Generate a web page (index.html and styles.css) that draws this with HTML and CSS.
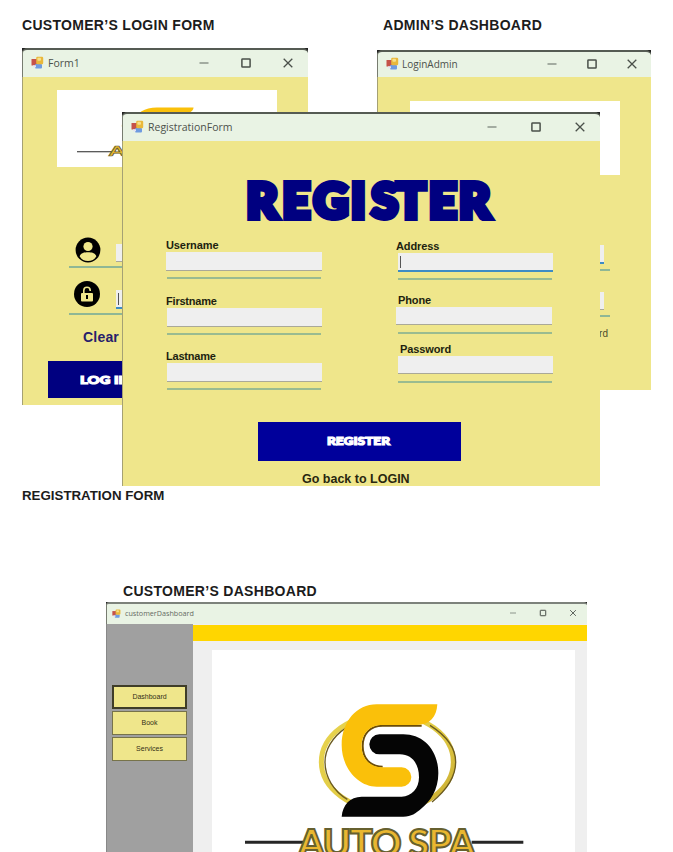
FILE: index.html
```html
<!DOCTYPE html>
<html lang="en">
<head>
<meta charset="utf-8">
<title>Auto Spa forms</title>
<link rel="stylesheet" href="styles.css">
</head>
<body>
<svg class="defs" width="0" height="0" aria-hidden="true">
  <defs>
    <linearGradient id="ring" x1="0" y1="0" x2="1" y2="1">
      <stop offset="0" stop-color="#e8d450"/><stop offset=".5" stop-color="#e2cc45"/><stop offset="1" stop-color="#c9ab30"/>
    </linearGradient>
    <symbol id="app" viewBox="0 0 13 13">
      <rect x=".5" y="3" width="6" height="6.5" fill="#c5524a"/>
      <rect x="4" y="8" width="7" height="4.5" rx="1" fill="#6f9be0"/>
      <rect x="5.2" y=".8" width="7" height="7.4" rx="1.2" fill="#e9b83b"/>
      <rect x="6.4" y="1.8" width="3.6" height="3" rx="1" fill="#f8df8a"/>
      <rect x="2" y="9.3" width="3" height="2" fill="#e6e3f2"/>
    </symbol>
    <symbol id="min" viewBox="0 0 12 12"><path d="M1.5 6h9" stroke="#747c74" stroke-width="1.2"/></symbol>
    <symbol id="max" viewBox="0 0 12 12"><rect x="1.9" y="1.9" width="8.2" height="8.2" rx=".6" fill="none" stroke="#4a504a" stroke-width="1.5"/></symbol>
    <symbol id="close" viewBox="0 0 12 12"><path d="M1.7 1.7l8.6 8.6M10.3 1.7l-8.6 8.6" stroke="#4a504a" stroke-width="1.3"/></symbol>
    <symbol id="logo" viewBox="0 0 363 240" preserveAspectRatio="none">
      <rect width="363" height="240" fill="#fff"/>
      <g transform="translate(18 40) scale(.33333)">
        <ellipse cx="472" cy="216" rx="198" ry="145" fill="none" stroke="url(#ring)" stroke-width="15"/>
        <path d="M350 112C304 142 285 182 285 216C285 260 310 303 352 328" fill="none" stroke="#6a5a20" stroke-width="4"/>
        <path d="M600 106C654 140 677 180 677 216C677 260 650 300 606 336" fill="none" stroke="#6a5a20" stroke-width="4"/>
        <path d="M458 107H575M458 107C420 107 398 132 398 168C398 205 420 230 458 230" fill="none" stroke="#6a4c08" stroke-width="6"/>
        <path d="M622 43H440C380 43 335 95 335 165C335 235 385 290 440 290H515A29 29 0 0 0 515 232H458C420 232 395 205 395 168C395 130 420 105 458 105H560C600 105 620 80 622 43Z" fill="#fac00a"/>
        <path d="M448 133H520C580 133 625 180 625 250C625 300 600 335 575 355C556 371 545 380 520 380H335C338 345 360 320 395 320H515C545 320 567 295 567 262C567 220 545 193 510 193H448A30 30 0 0 1 448 133Z" fill="#050505"/>
        <path d="M45 457H220M725 457H880" stroke="#262626" stroke-width="9"/>
        <text class="logo-text" x="204" y="500" textLength="532">AUTO SPA</text>
      </g>
    </symbol>
  </defs>
</svg>

<main class="board">
  <figure class="fig fig-login">
    <figcaption>CUSTOMER’S LOGIN FORM</figcaption>
    <div class="window">
      <header class="bar">
        <svg class="app"><use href="#app"/></svg><span>Form1</span>
        <nav><svg><use href="#min"/></svg><svg><use href="#max"/></svg><svg><use href="#close"/></svg></nav>
      </header>
      <div class="body">
        <svg class="banner" width="220" height="77"><use href="#logo" width="220" height="77"/></svg>
        <div class="cred">
          <svg class="badge" viewBox="0 0 26 26"><circle cx="13" cy="13" r="12.4"/><circle cx="13" cy="9.5" r="4.6" class="cream"/><path class="cream" d="M4.6 19.2C6 15.8 9 15.2 13 15.2s7 .6 8.4 4C19.500 22.600 16.500 24 13 24s-6.500-1.400-8.400-4.800z"/></svg>
          <i class="input"></i>
        </div>
        <div class="cred second">
          <svg class="badge" viewBox="0 0 26 26"><circle cx="13" cy="13" r="13"/><rect x="7" y="12" width="12" height="8.500" rx="1" class="cream"/><path d="M9.800 12V9.500a3.200 3.200 0 0 1 6.400 0V10" fill="none" stroke="#efe68b" stroke-width="1.600"/><path d="M13 14v4" stroke="#000" stroke-width="2"/></svg>
          <i class="input focus"></i>
        </div>
        <div class="clear">Clear</div>
        <div class="login-btn"><svg width="74" height="14"><text class="display small" x="0" y="11.200" textLength="50" lengthAdjust="spacingAndGlyphs">LOG IN</text></svg></div>
      </div>
    </div>
  </figure>

  <figure class="fig fig-admin">
    <figcaption>ADMIN’S DASHBOARD</figcaption>
    <div class="window">
      <header class="bar">
        <svg class="app"><use href="#app"/></svg><span>LoginAdmin</span>
        <nav><svg><use href="#min"/></svg><svg><use href="#max"/></svg><svg><use href="#close"/></svg></nav>
      </header>
      <div class="body">
        <svg class="banner" width="210" height="74"><use href="#logo" width="210" height="74"/></svg>
        <div class="slot"><i class="input focus"></i></div>
        <div class="slot second"><i class="input"></i></div>
        <div class="show">Show Password</div>
      </div>
    </div>
  </figure>

  <figure class="fig fig-register">
    <div class="window">
      <header class="bar">
        <svg class="app"><use href="#app"/></svg><span>RegistrationForm</span>
        <nav><svg><use href="#min"/></svg><svg><use href="#max"/></svg><svg><use href="#close"/></svg></nav>
      </header>
      <div class="body">
        <svg class="title" width="254" height="48"><text class="display" y="42" x="4.500 40.500 71.500 109 129.500 154.500 187 217">REGISTER</text></svg>
        <div class="columns">
          <div class="col">
            <label class="field"><span>Username</span><i class="input"></i></label>
            <label class="field inset"><span>Firstname</span><i class="input"></i></label>
            <label class="field inset"><span>Lastname</span><i class="input"></i></label>
          </div>
          <div class="col right">
            <label class="field address"><span>Address</span><i class="input focus"></i></label>
            <label class="field phone"><span>Phone</span><i class="input"></i></label>
            <label class="field password"><span>Password</span><i class="input"></i></label>
          </div>
        </div>
        <div class="register-btn"><svg width="68" height="14"><text class="display small" x="2" y="11.300" textLength="63" lengthAdjust="spacingAndGlyphs">REGISTER</text></svg></div>
        <div class="back">Go back to LOGIN</div>
      </div>
    </div>
    <figcaption>REGISTRATION FORM</figcaption>
  </figure>

  <figure class="fig fig-dash">
    <figcaption>CUSTOMER’S DASHBOARD</figcaption>
    <div class="window">
      <header class="bar">
        <svg class="app"><use href="#app"/></svg><span>customerDashboard</span>
        <nav><svg><use href="#min"/></svg><svg><use href="#max"/></svg><svg><use href="#close"/></svg></nav>
      </header>
      <div class="dash">
        <aside><b class="active">Dashboard</b><b>Book</b><b>Services</b></aside>
        <section><div class="gold"></div><svg class="hero" width="363" height="240"><use href="#logo" width="363" height="240"/></svg></section>
      </div>
    </div>
  </figure>
</main>
</body>
</html>
```
FILE: styles.css
```css
* { box-sizing: border-box; }
body { margin: 0; background: #fff; font-family: "Liberation Sans", Arial, sans-serif; }
.defs { display: block; width: 0; height: 0; }
.board { position: relative; width: 673px; height: 852px; overflow: hidden; }
.fig { position: absolute; margin: 0; }
figcaption { font-weight: bold; font-size: 14px; line-height: 16px; letter-spacing: .3px; color: #1c1c1c; white-space: nowrap; }

.fig-login { left: 22px; top: 17px; }
.fig-admin { left: 377px; top: 17px; }
.fig-register { left: 22px; top: 112px; }
.fig-dash { left: 106px; top: 583px; }

.window { background: linear-gradient(#222, #222) top / 100% 8px no-repeat; overflow: hidden; display: flex; flex-direction: column; }
.bar { flex: none; display: flex; align-items: center; background: #e9f3e4; border-top: 2px solid #555b53; border-left: 1px solid #777c70; border-radius: 5px 5px 0 0; font: 10.5px "Open Sans", "Noto Sans", sans-serif; color: #4c514b; padding: 0 0 2px 8px; }
.bar .app { width: 13px; height: 13px; margin-right: 4px; }
.bar nav { margin-left: auto; display: flex; align-items: center; }
.bar nav svg { width: 12px; height: 12px; display: block; }
.body { flex: 1; background: #efe68b; border-left: 1px solid #a5a174; display: flex; flex-direction: column; align-items: flex-start; }
.banner { display: block; flex: none; }
.input { display: block; background: #efefef; border-bottom: 1px solid #aaa998; }
.input.focus { border-bottom: 2px solid #3e8cc4; padding: 3px 0 0 2px; }
.input.focus::before { content: ""; display: block; width: 1px; height: 12px; background: #555; }

.display { font-family: Lato, sans-serif; font-weight: 900; font-size: 48px; fill: #000080; stroke: #000080; stroke-width: 6px; stroke-linejoin: miter; stroke-miterlimit: 3; }
.display.small { font-size: 12px; fill: #fff; stroke: #fff; stroke-width: 1.2px; }
.logo-text { font-family: Lato, sans-serif; font-weight: 900; font-size: 114px; fill: #e9b730; stroke: #66602f; stroke-width: 6px; }

.fig-login .window { width: 286px; height: 357px; margin-top: 15px; }
.fig-login .bar { height: 29px; }
.fig-login nav { gap: 30px; padding-right: 14px; }
.fig-login .banner { margin: 13px 0 0 34px; }
.cred { margin: 70px 0 0 46px; width: 190px; height: 31px; border-bottom: 2px solid #8fb795; display: flex; align-items: flex-start; padding-left: 6px; }
.cred.second { margin-top: 13px; height: 34px; padding-left: 5px; }
.badge { width: 26px; height: 26px; flex: none; }
.cream { fill: #efe68b; }
.cred .input { width: 110px; height: 18px; margin: 7px 0 0 15px; }
.cred.second .input { margin: 9px 0 0 16px; height: 19px; }
.clear { margin: 14px 0 0 60px; font-weight: bold; font-size: 14px; line-height: 16px; letter-spacing: .2px; color: #27206b; }
.login-btn { margin: 16px 0 0 25px; width: 220px; height: 37px; background: #000080; padding: 12px 0 0 32px; }
.login-btn svg, .register-btn svg { display: block; }

.fig-admin figcaption { padding-left: 6px; }
.fig-admin .window { width: 274px; height: 340px; margin-top: 17px; }
.fig-admin .bar { height: 27px; font-size: 10px; }
.fig-admin .app { margin-right: 3px; }
.fig-admin nav { gap: 28px; padding-right: 13px; }
.fig-admin .banner { margin: 24px 0 0 32px; }
.slot { width: 160px; height: 26px; margin: 70px 0 0 72px; border-bottom: 2px solid #8fb795; padding-right: 6px; }
.slot .input { height: 19px; }
.slot.second { margin-top: 21px; height: 25px; }
.slot.second .input { height: 18px; }
.show { width: 230px; margin-top: 11px; text-align: right; font-size: 10px; line-height: 12px; color: #4e4b2c; }

.fig-register .window { width: 478px; height: 374px; margin-left: 100px; }
.fig-register .bar { height: 29px; }
.fig-register nav { gap: 32px; padding-right: 14px; }
.fig-register figcaption { padding-top: 2px; font-size: 13.3px; letter-spacing: 0; }
.title { display: block; margin: 35px 0 0 119px; flex: none; overflow: visible; }
.columns { display: flex; margin: 15px 0 0 43px; gap: 75px; height: 152px; }
.col { width: 156px; }
.field { display: block; height: 55.5px; font-weight: bold; font-size: 11px; line-height: 13px; color: #211f10; }
.field span { display: block; height: 13px; letter-spacing: -.1px; }
.field .input { height: 19px; }
.field::after { content: ""; display: block; height: 2px; width: 154px; margin: 6px 0 0 1px; background: #9abb90; }
.field.inset .input { margin-left: 1px; }
.field.inset span { letter-spacing: -.2px; }
.right .field::after { margin-left: 1px; }
.address { height: 55px; padding-top: 1px; }
.address span { margin-left: -1px; }
.address .input { margin-left: 1px; }
.phone { height: 49px; }
.phone span { padding-left: 1px; }
.phone .input { margin: 0 1px 0 -1px; height: 18px; }
.phone::after { margin-top: 7px; }
.password span { padding-left: 3px; }
.password .input { margin-left: 1px; height: 18px; }
.password::after { margin-top: 7px; }
.register-btn { margin: 31px 0 0 135px; width: 203px; height: 39px; background: #00009b; padding: 12px 0 0 67px; flex: none; }
.back { margin: 11px 0 0 179px; font-weight: bold; font-size: 12.5px; line-height: 15px; color: #29260f; white-space: nowrap; }

.fig-dash figcaption { padding-left: 17px; }
.fig-dash .window { width: 481px; height: 290px; margin-top: 3px; }
.fig-dash .bar { height: 22px; font-size: 7.2px; padding-left: 5px; border-radius: 3px 3px 0 0; border-top-color: #7d827b; color: #656a63; }
.fig-dash .app { width: 9px; height: 9px; }
.fig-dash nav { gap: 22px; padding-right: 10px; }
.fig-dash nav svg { width: 8px; height: 8px; }
.dash { flex: 1; display: flex; background: #efefef; }
aside { width: 87px; background: #a0a0a0; padding: 61px 6px 0 5px; display: flex; flex-direction: column; gap: 2px; border-left: 1px solid #888; }
aside b { font: 7px "Liberation Sans", sans-serif; height: 24px; line-height: 22px; text-align: center; background: #efe68b; border: 1px solid #77734a; color: #333018; }
aside b.active { border: 2px solid #3f3d28; line-height: 20px; }
.dash section { flex: 1; }
.gold { height: 16px; margin-top: 1px; background: #ffd600; }
.hero { display: block; margin: 9px 0 0 19px; }
```
